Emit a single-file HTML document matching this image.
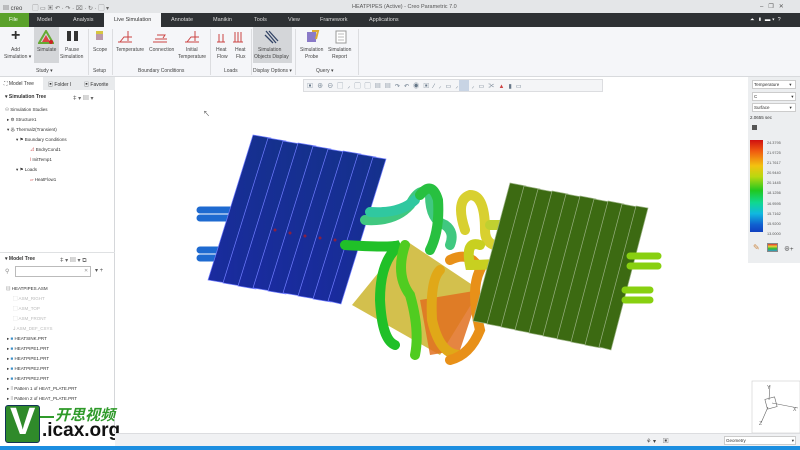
<!DOCTYPE html>
<html><head><meta charset="utf-8"><style>
*{margin:0;padding:0;box-sizing:border-box}
body{width:800px;height:450px;overflow:hidden;background:#fff;font-family:"Liberation Sans","Noto Sans CJK SC",sans-serif;font-size:5px;color:#333;position:relative}
.a{position:absolute}
.t{position:absolute;white-space:nowrap}
</style></head><body>
<!-- title bar -->
<div class="a" style="left:0;top:0;width:800px;height:13px;background:#e4e6e8"></div>
<div class="t" style="left:3px;top:3px;font-size:6px;color:#444">▤ creo<span style="margin-left:10px;color:#666">▢ ▭ ▣ ↶ · ↷ · ⌧ · ↻ · ▢ ▾</span></div>
<div class="t" style="left:352px;top:4px;font-size:5.5px;color:#555">HEATPIPES (Active) - Creo Parametric 7.0</div>
<div class="t" style="left:760px;top:3px;font-size:6px;color:#555">–&nbsp;&nbsp;&nbsp;❐&nbsp;&nbsp;&nbsp;✕</div>
<!-- tab bar -->
<div class="a" style="left:0;top:13px;width:800px;height:14px;background:#2e3134"></div>
<div class="a" style="left:0;top:13px;width:29px;height:14px;background:#5aa12b"></div>
<div class="a" style="left:104px;top:13px;width:57px;height:14px;background:#f5f6f8"></div>
<div class="t" style="left:0;top:17px;font-size:5.5px;color:#ddd;width:800px">
<span class="t" style="left:9px;color:#fff">File</span>
<span class="t" style="left:37px">Model</span>
<span class="t" style="left:73px">Analysis</span>
<span class="t" style="left:114px;color:#333">Live Simulation</span>
<span class="t" style="left:171px">Annotate</span>
<span class="t" style="left:213px">Manikin</span>
<span class="t" style="left:254px">Tools</span>
<span class="t" style="left:288px">View</span>
<span class="t" style="left:320px">Framework</span>
<span class="t" style="left:369px">Applications</span>
<span class="t" style="left:750px;color:#fff">⏶&nbsp; ▮&nbsp; ▬ ▾&nbsp; ?</span>
</div>
<!-- ribbon -->
<div class="a" style="left:0;top:27px;width:800px;height:50px;background:#f5f6f9;border-bottom:1px solid #d8dadd"></div>
<div class="a" style="left:34px;top:27px;width:25px;height:36px;background:#d4d6d9"></div>
<div class="a" style="left:253px;top:27px;width:39px;height:36px;background:#d4d6d9"></div>
<div class="a" style="left:88px;top:29px;width:1px;height:46px;background:#dcdde0"></div>
<div class="a" style="left:112px;top:29px;width:1px;height:46px;background:#dcdde0"></div>
<div class="a" style="left:210px;top:29px;width:1px;height:46px;background:#dcdde0"></div>
<div class="a" style="left:251px;top:29px;width:1px;height:46px;background:#dcdde0"></div>
<div class="a" style="left:295px;top:29px;width:1px;height:46px;background:#dcdde0"></div>
<div class="a" style="left:358px;top:29px;width:1px;height:46px;background:#dcdde0"></div>
<div class="t" style="left:11px;top:27px;font-size:16px;color:#333;font-weight:bold">+</div>
<svg class="a" style="left:38px;top:30px" width="16" height="14"><polygon points="8,1 15,13 1,13" fill="none" stroke="#6a3" stroke-width="2"/><polygon points="8,5 12,12 4,12" fill="#d44"/><circle cx="13" cy="12" r="2" fill="#c22"/></svg>
<div class="a" style="left:67px;top:31px;width:4px;height:10px;background:#333"></div>
<div class="a" style="left:74px;top:31px;width:4px;height:10px;background:#333"></div>
<div class="a" style="left:96px;top:31px;width:7px;height:9px;background:#b9a;border-top:3px solid #d7c540"></div>
<svg class="a" style="left:115px;top:29px" width="180" height="16" stroke="#c44" fill="none" stroke-width="1"><path d="M3 13h14M5 13l4-5h8M13 2v10"/><path d="M38 13h14M40 10h12M42 6h8l-2 3"/><path d="M70 13h14M72 13l4-5h8M80 2v10"/><path d="M102 13h8M104 5v8M108 5v8"/><path d="M118 13h10M120 3v10M123 3v10M126 3v10"/></svg>
<svg class="a" style="left:262px;top:29px" width="20" height="16"><path d="M4 2l10 12M7 2l9 10M3 6l8 8" stroke="#346" stroke-width="1.3" fill="none"/></svg>
<svg class="a" style="left:304px;top:29px" width="60" height="16"><path d="M3 3h9v10H3z" fill="#8a7ac8"/><path d="M8 2l6 0-2 8" stroke="#da3" stroke-width="2" fill="none"/><rect x="32" y="2" width="10" height="12" fill="#fff" stroke="#999"/><path d="M34 5h6M34 8h6M34 11h6" stroke="#bbb"/></svg>
<div class="t" style="left:0;top:47px;font-size:5px;color:#444;line-height:6.5px">
<span class="t" style="left:11px">Add</span><span class="t" style="left:4px;top:7px">Simulation ▾</span>
<span class="t" style="left:37px">Simulate</span>
<span class="t" style="left:65px">Pause</span><span class="t" style="left:60px;top:7px">Simulation</span>
<span class="t" style="left:93px">Scope</span>
<span class="t" style="left:116px">Temperature</span>
<span class="t" style="left:149px">Connection</span>
<span class="t" style="left:186px">Initial</span><span class="t" style="left:178px;top:7px">Temperature</span>
<span class="t" style="left:216px">Heat</span><span class="t" style="left:217px;top:7px">Flow</span>
<span class="t" style="left:235px">Heat</span><span class="t" style="left:236px;top:7px">Flux</span>
<span class="t" style="left:258px">Simulation</span><span class="t" style="left:254px;top:7px">Objects Display</span>
<span class="t" style="left:300px">Simulation</span><span class="t" style="left:305px;top:7px">Probe</span>
<span class="t" style="left:328px">Simulation</span><span class="t" style="left:332px;top:7px">Report</span>
<span class="t" style="left:36px;top:21px">Study ▾</span>
<span class="t" style="left:93px;top:21px">Setup</span>
<span class="t" style="left:138px;top:21px">Boundary Conditions</span>
<span class="t" style="left:224px;top:21px">Loads</span>
<span class="t" style="left:253px;top:21px">Display Options ▾</span>
<span class="t" style="left:316px;top:21px">Query ▾</span>
</div>
<!-- left panel -->
<div class="a" style="left:0;top:77px;width:115px;height:356px;background:#fff;border-right:1px solid #d5d7da"></div>
<div class="a" style="left:0;top:77px;width:115px;height:13px;background:#e8eaec"></div>
<div class="a" style="left:0;top:77px;width:43px;height:13px;background:#fff"></div>
<div class="t" style="left:4px;top:81px;font-size:5px">⛶ Model Tree</div>
<div class="t" style="left:48px;top:81px;font-size:5px">▣ Folder I</div>
<div class="t" style="left:84px;top:81px;font-size:5px">▣ Favorite</div>
<div class="t" style="left:5px;top:94px;font-size:5px;font-weight:bold">▾ Simulation Tree</div>
<div class="t" style="left:73px;top:93px;font-size:6px;color:#666">ǂ ▾ ▤ ▾</div>
<div class="t" style="left:0;top:105px;font-size:4.5px;color:#333;line-height:10px">
<div class="t" style="left:5px;top:0">⚇ Simulation Studies</div>
<div class="t" style="left:7px;top:10px">▸ ⚙ Structure1</div>
<div class="t" style="left:7px;top:20px">▾ ♨ Thermal2(Transient)</div>
<div class="t" style="left:16px;top:30px">▾ ⚑ Boundary Conditions</div>
<div class="t" style="left:30px;top:40px"><span style="color:#c44">⊿</span> BndryCond1</div>
<div class="t" style="left:30px;top:50px"><span style="color:#c44">ǀ</span> InitTemp1</div>
<div class="t" style="left:16px;top:60px">▾ ⚑ Loads</div>
<div class="t" style="left:30px;top:70px"><span style="color:#c44">⏥</span> HeatFlow1</div>
</div>
<div class="a" style="left:0;top:252px;width:115px;height:1px;background:#dfe1e3"></div>
<div class="t" style="left:5px;top:256px;font-size:5px;font-weight:bold">▾ Model Tree</div>
<div class="t" style="left:60px;top:255px;font-size:6px;color:#666">ǂ ▾ ▤ ▾ ⧉</div>
<div class="t" style="left:5px;top:268px;font-size:6px;color:#888">⚲</div>
<div class="a" style="left:15px;top:266px;width:76px;height:11px;border:1px solid #bbb;background:#fff"></div>
<div class="t" style="left:84px;top:268px;font-size:5px;color:#999">✕</div>
<div class="t" style="left:95px;top:267px;font-size:6px;color:#555">▾ +</div>
<div class="t" style="left:0;top:284px;font-size:4.5px;color:#333;line-height:10px">
<div class="t" style="left:6px;top:0">▤ HEATPIPES.ASM</div>
<div class="t" style="left:13px;top:10px;color:#bbb">▢ ASM_RIGHT</div>
<div class="t" style="left:13px;top:20px;color:#bbb">▢ ASM_TOP</div>
<div class="t" style="left:13px;top:30px;color:#bbb">▢ ASM_FRONT</div>
<div class="t" style="left:13px;top:40px;color:#bbb">⅃ ASM_DEF_CSYS</div>
<div class="t" style="left:7px;top:50px">▸ <span style="color:#3a8fc8">■</span> HEATSINK.PRT</div>
<div class="t" style="left:7px;top:60px">▸ <span style="color:#3a8fc8">■</span> HEATPIPE1.PRT</div>
<div class="t" style="left:7px;top:70px">▸ <span style="color:#3a8fc8">■</span> HEATPIPE1.PRT</div>
<div class="t" style="left:7px;top:80px">▸ <span style="color:#3a8fc8">■</span> HEATPIPE2.PRT</div>
<div class="t" style="left:7px;top:90px">▸ <span style="color:#3a8fc8">■</span> HEATPIPE2.PRT</div>
<div class="t" style="left:7px;top:100px">▸ ⁞⁞ Pattern 1 of HEAT_PLATE.PRT</div>
<div class="t" style="left:7px;top:110px">▸ ⁞⁞ Pattern 2 of HEAT_PLATE.PRT</div>
</div>
<!-- watermark -->
<div class="a" style="left:5px;top:405px;width:35px;height:38px;background:#2f8a2a;border-radius:3px;border:1px solid #135"></div>
<div class="t" style="left:10px;top:401px;font-size:38px;font-weight:bold;color:#fff;font-family:'Liberation Sans',sans-serif">V</div>
<div class="a" style="left:40px;top:416px;width:14px;height:2px;background:#2f9a2a"></div>
<div class="t" style="left:55px;top:404px;font-size:15px;font-weight:bold;color:#2f9a2a;font-style:italic">开思视频</div>
<div class="t" style="left:42px;top:420px;font-size:19px;font-weight:bold;color:#111">.icax.org</div>
<!-- view toolbar -->
<div class="a" style="left:303px;top:79px;width:300px;height:13px;background:#f4f5f7;border:1px solid #dcdde0"></div>
<div class="t" style="left:307px;top:81px;font-size:6px;color:#678;letter-spacing:4.1px">▣⊕⊖▢⸝▢▢▤▤↷↶◉▣⁄⸝▭⸝⁘⸝▭✂<span style="color:#c44">▲</span>▮▭</div>
<div class="a" style="left:459px;top:80px;width:10px;height:11px;background:#c8d4e4"></div>
<div class="t" style="left:203px;top:109px;font-size:7px;color:#555">↖</div>
<!-- right panel -->
<div class="a" style="left:748px;top:77px;width:52px;height:186px;background:#eceef0"></div>
<div class="a" style="left:752px;top:80px;width:44px;height:9px;background:#fff;border:1px solid #ccc"></div>
<div class="a" style="left:752px;top:92px;width:44px;height:9px;background:#fff;border:1px solid #ccc"></div>
<div class="a" style="left:752px;top:103px;width:44px;height:9px;background:#fff;border:1px solid #ccc"></div>
<div class="t" style="left:754px;top:82px;font-size:4.5px">Temperature<span style="margin-left:10px">▾</span></div>
<div class="t" style="left:754px;top:94px;font-size:4.5px">C<span style="margin-left:34px">▾</span></div>
<div class="t" style="left:754px;top:105px;font-size:4.5px">Surface<span style="margin-left:20px">▾</span></div>
<div class="t" style="left:750px;top:115px;font-size:4.5px">2.0655 sec</div>
<div class="a" style="left:752px;top:125px;width:5px;height:5px;background:#555"></div>
<div class="a" style="left:750px;top:140px;width:13px;height:92px;background:linear-gradient(#d01010,#f05a10 12%,#f3c210 28%,#b8d810 40%,#20c820 55%,#10d890 68%,#10b8e0 80%,#1060d0 92%,#1040c0)"></div>
<div class="t" style="left:767px;top:138px;font-size:3.8px;color:#555;line-height:10.1px">24.3795<br>21.9725<br>21.7617<br>20.9440<br>20.1445<br>18.1256<br>16.9595<br>15.7162<br>15.9200<br>13.0000</div>
<div class="t" style="left:753px;top:243px;font-size:8px;color:#c84">✎</div>
<div class="a" style="left:767px;top:243px;width:11px;height:9px;background:linear-gradient(#d33,#ec3,#3b3,#39c);border:1px solid #888"></div>
<div class="t" style="left:784px;top:244px;font-size:6px;color:#444">⊕+</div>
<!-- model -->
<svg class="a" style="left:0;top:0" width="800" height="450">
<defs>
<linearGradient id="bf" x1="0" y1="0" x2="1" y2="0"><stop offset="0" stop-color="#1a2aa0"/><stop offset="1" stop-color="#14328a"/></linearGradient>
</defs>
<!-- left blue stubs -->
<g stroke="#1e6ad0" stroke-width="7" stroke-linecap="round"><path d="M200 210h30M200 218h30M200 250h30M200 258h30"/></g>
<!-- blue fins -->
<g fill="url(#bf)" stroke="#6f7cff" stroke-width="0.7">
<polygon points="253,135 271,138 226,283 208,280"/>
<polygon points="268,138 286,141 241,286 223,283"/>
<polygon points="283,141 301,144 256,289 238,286"/>
<polygon points="298,143 316,146 271,291 253,288"/>
<polygon points="313,146 331,149 286,294 268,291"/>
<polygon points="328,149 346,152 301,296 283,293"/>
<polygon points="343,151 361,154 316,299 298,296"/>
<polygon points="358,154 376,157 331,302 313,299"/>
<polygon points="373,157 386,159 341,304 328,301"/>
</g>
<g fill="#8a2040"><circle cx="275" cy="230" r="1.5"/><circle cx="290" cy="233" r="1.5"/><circle cx="305" cy="236" r="1.5"/><circle cx="320" cy="238" r="1.5"/><circle cx="335" cy="240" r="1.5"/></g>
<!-- plate -->
<polygon points="352,305 405,240 480,290 440,355" fill="#c8b020" opacity="0.8"/>
<polygon points="420,300 480,290 460,350 430,355" fill="#e07020" opacity="0.85"/>
<!-- tubes -->
<g fill="none" stroke-linecap="round" stroke-width="10">
<path d="M365 220 Q395 222 410 205 Q420 185 430 195 Q430 220 445 225 Q455 232 450 245" stroke="#40c880"/>
<path d="M370 212 Q400 214 415 200" stroke="#30c8a0"/>
<path d="M420 195 Q432 180 438 200 Q440 230 430 250" stroke="#28c040"/>
<path d="M345 245 Q390 248 400 245 Q380 260 380 300 Q382 340 395 345" stroke="#20c028"/>
<path d="M405 245 Q395 275 410 295 Q420 330 415 355" stroke="#50cc20"/>
<path d="M465 230 Q455 200 470 195 Q485 195 485 230 Q485 250 510 245" stroke="#d8d030"/>
<path d="M440 270 Q430 280 432 320 Q440 355 460 355" stroke="#e0a818" />
<path d="M450 260 Q470 250 480 270 Q470 290 480 330 Q470 355 450 360" stroke="#e89018"/>
<path d="M480 245 Q465 240 470 265 Q500 265 520 260" stroke="#c8d020"/>
<path d="M490 225 h40" stroke="#c0d030"/>
</g>
<!-- green fins -->
<g fill="#3c6a12" stroke="#98b080" stroke-width="0.7">
<polygon points="510,183 526,186 489,324 473,321"/>
<polygon points="524,186 540,189 503,327 487,324"/>
<polygon points="538,189 554,192 517,330 501,327"/>
<polygon points="552,191 568,194 531,333 515,330"/>
<polygon points="566,194 582,197 545,336 529,333"/>
<polygon points="580,196 596,199 559,339 543,336"/>
<polygon points="594,199 610,202 573,342 557,339"/>
<polygon points="608,201 624,204 587,345 571,342"/>
<polygon points="622,204 638,207 601,348 585,345"/>
<polygon points="636,206 648,208 611,350 599,347"/>
</g>
<g stroke="#88d010" stroke-width="7" stroke-linecap="round"><path d="M630 256h28M630 266h28M625 290h25M625 300h25"/></g>
<!-- triad -->
<rect x="752" y="381" width="48" height="52" fill="#fff" stroke="#ccc" stroke-width="0.6"/>
<g stroke="#666" stroke-width="0.6" fill="none"><path d="M769 400l1 -15M772 403l26 5M768 407l-7 16"/><rect x="766" y="398" width="10" height="10" transform="rotate(-15 771 403)"/></g>
<text x="767" y="389" font-size="5" fill="#666" font-family="Liberation Sans">Y</text>
<text x="793" y="411" font-size="5" fill="#666" font-family="Liberation Sans">X</text>
<text x="759" y="425" font-size="5" fill="#666" font-family="Liberation Sans">Z</text>
</svg>
<!-- status bar -->
<div class="a" style="left:115px;top:433px;width:685px;height:14px;background:#f0f1f3;border-top:1px solid #dcdde0"></div>
<div class="t" style="left:646px;top:436px;font-size:6px;color:#444">⚘ ▾&nbsp;&nbsp;&nbsp;&nbsp;▣</div>
<div class="a" style="left:724px;top:436px;width:72px;height:9px;background:#fff;border:1px solid #ccc"></div>
<div class="t" style="left:726px;top:438px;font-size:4.5px">Geometry<span style="margin-left:46px">▾</span></div>
<div class="a" style="left:0;top:446px;width:800px;height:4px;background:#1c8ee0"></div>
</body></html>
